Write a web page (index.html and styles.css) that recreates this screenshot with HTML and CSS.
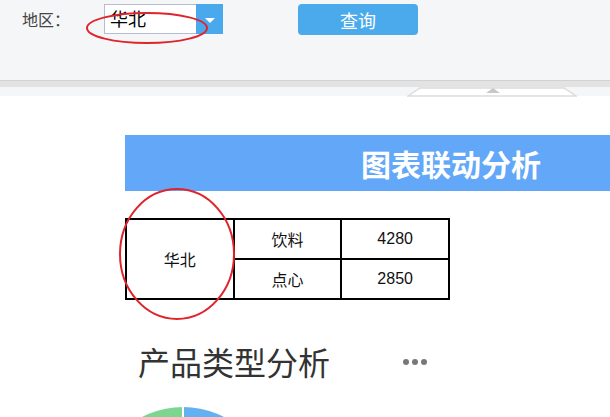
FILE: index.html
```html
<!DOCTYPE html>
<html lang="zh-CN">
  <head>
    <meta charset="UTF-8" />
    <meta name="viewport" content="width=device-width, initial-scale=1.0" />
    <title>图表联动分析</title>
    <link rel="stylesheet" href="styles.css">
  </head>
  <body>
    <div class="toolbar">
      <span class="toolbar__label">地区：</span>
      <div class="select">
        <span class="select__value">华北</span>
        <span class="select__arrow"></span>
      </div>
      <button class="query">查询</button>
      <svg class="mark mark--select" width="126" height="36" viewBox="0 0 126 36">
        <ellipse cx="63" cy="18" rx="60" ry="15" />
      </svg>
    </div>
    <div class="divider"></div>
    <div class="strip">
      <div class="strip__handle">
        <svg width="170" height="10" viewBox="0 0 170 10">
          <path d="M1 9 L13 1 L157 1 L169 9 Z" fill="#fff" stroke="#dcdcdc" stroke-width="1.5" />
          <path d="M79 6 L86 1 L93 6 Z" fill="#c8c8c8" />
        </svg>
      </div>
    </div>

    <div class="content">
      <div class="banner">图表联动分析</div>

      <div class="table-wrap">
        <table class="sales">
          <tr>
            <td rowspan="2">华北</td>
            <td>饮料</td>
            <td>4280</td>
          </tr>
          <tr>
            <td>点心</td>
            <td>2850</td>
          </tr>
        </table>
        <svg class="mark mark--cell" width="120" height="134" viewBox="0 0 120 134">
          <ellipse cx="60" cy="67" rx="57" ry="65" />
        </svg>
      </div>

      <div class="section-head">
        <h2 class="section-head__title">产品类型分析</h2>
        <span class="section-head__more">
          <i></i><i></i><i></i>
        </span>
      </div>

      <div class="chart">
        <svg class="pie" width="200" height="200" viewBox="0 0 200 200">
          <path d="M100 100 L100 11 A89 89 0 0 0 11 100 Z" fill="#7dd68f" />
          <path d="M100 100 L100 11 A89 89 0 0 1 189 100 Z" fill="#63b1f0" />
          <line x1="100" y1="100" x2="100" y2="8" stroke="#fff" stroke-width="2" />
        </svg>
      </div>
    </div>
  </body>
</html>
```

FILE: styles.css
```css
* {
  padding: 0;
  margin: 0;
  box-sizing: border-box;
}

html,
body {
  height: 100%;
  overflow: hidden;
}

body {
  background: #fff;
  font-family: "Noto Sans CJK SC", "Liberation Sans", sans-serif;
  color: #333;
}

.toolbar {
  position: relative;
  height: 80px;
  padding: 4px 0 0 22px;
  display: flex;
  align-items: flex-start;
  background: #f5f6f8;
}

.toolbar__label {
  width: 82px;
  height: 31px;
  line-height: 31px;
  font-size: 16px;
  color: #444;
}

.select {
  width: 119px;
  height: 30px;
  display: flex;
  border: 1px solid #b6bcd2;
  background: #fff;
}

.select__value {
  flex: 1;
  padding-left: 5px;
  line-height: 27px;
  font-size: 18px;
  color: #000;
}

.select__arrow {
  width: 27px;
  margin: -1px -1px -1px 0;
  display: flex;
  justify-content: center;
  align-items: center;
  background: #4aa8ec;
}

.select__arrow::after {
  content: "";
  border-left: 5px solid transparent;
  border-right: 5px solid transparent;
  border-top: 5px solid #fff;
  margin-top: 2px;
}

.query {
  width: 120px;
  height: 31px;
  margin-left: 75px;
  border: none;
  border-radius: 4px;
  background: #4aaaeb;
  color: #fff;
  font-family: inherit;
  font-size: 18px;
}

.mark {
  position: absolute;
  fill: none;
  stroke: #e0242c;
  stroke-width: 2;
}

.mark--select {
  left: 84px;
  top: 10px;
}

.divider {
  height: 8px;
  border-top: 1px solid #d2d2d2;
  border-bottom: 1px solid #d8d8d8;
  background: #e3e3e3;
}

.strip {
  height: 9px;
  padding-left: 407px;
  background: #f5f6f8;
}

.strip__handle svg {
  display: block;
  margin-top: -1px;
}

.content {
  padding: 39px 0 0 125px;
}

.banner {
  height: 56px;
  padding-left: 236px;
  line-height: 56px;
  background: #63a7f8;
  color: #fff;
  font-size: 30px;
  font-weight: 700;
}

.table-wrap {
  position: relative;
  margin-top: 27px;
  width: 325px;
}

.sales {
  width: 325px;
  border-collapse: collapse;
  font-family: "Liberation Sans", "Noto Sans CJK SC", sans-serif;
  font-size: 16px;
  color: #111;
}

.sales td {
  width: 108px;
  height: 40px;
  border: 2px solid #000;
  text-align: center;
}

.mark--cell {
  left: -8px;
  top: -31px;
}

.section-head {
  width: 289px;
  margin: 40px 0 0 13px;
  display: flex;
  justify-content: space-between;
  align-items: center;
}

.section-head__title {
  font-size: 32px;
  font-weight: 400;
  color: #333;
  line-height: 42px;
}

.section-head__more {
  display: flex;
  gap: 3px;
  margin-top: 2px;
}

.section-head__more i {
  width: 6px;
  height: 6px;
  border-radius: 50%;
  background: #787878;
}

.chart {
  height: 40px;
  margin: 14px 0 0 -42px;
  overflow: hidden;
}

.pie {
  display: block;
}
```
